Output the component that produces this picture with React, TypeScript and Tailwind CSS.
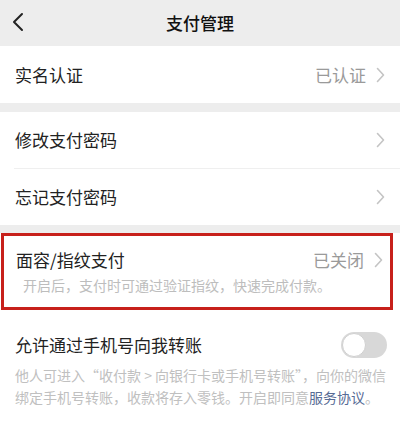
import React from 'react';

const Chevron = () => (
  <svg width="9" height="16" viewBox="0 0 9 16" fill="none" className="shrink-0">
    <path d="M1.5 1.5L7.5 8L1.5 14.5" stroke="#c4c4c4" strokeWidth="1.6" strokeLinecap="round" strokeLinejoin="round" />
  </svg>
);

const Row: React.FC<{ label: string; value?: string; h: string }> = ({ label, value, h }) => (
  <div className={`flex items-center justify-between pl-[15px] pr-[15px] ${h}`}>
    <span className="text-[17px] text-[#222]">{label}</span>
    <div className="flex items-center gap-[10px]">
      {value && <span className="text-[17px] text-[#9a9a9a]">{value}</span>}
      <Chevron />
    </div>
  </div>
);

export default function App() {
  return (
    <div
      className="w-[400px] h-[425px] bg-white overflow-hidden"
      style={{ fontFamily: '"Noto Sans CJK SC", "Noto Sans", sans-serif' }}
    >
      {/* header */}
      <div className="relative h-[46px] bg-[#ededed] flex items-center justify-center">
        <svg width="12" height="20" viewBox="0 0 12 20" fill="none" className="absolute left-[12px] top-[12px]">
          <path d="M10 2L2 10L10 18" stroke="#222" strokeWidth="2" strokeLinecap="round" strokeLinejoin="round" />
        </svg>
        <span className="text-[17px] font-medium text-[#111]">支付管理</span>
      </div>

      <div className="bg-white">
        <Row label="实名认证" value="已认证" h="h-[57px]" />
      </div>

      <div className="h-[9px] bg-[#ededed]" />

      <div className="bg-white">
        <Row label="修改支付密码" h="h-[56px]" />
        <div className="ml-[14px] h-px bg-[#efefef]" />
        <Row label="忘记支付密码" h="h-[56px]" />
      </div>

      <div className="h-[8px] bg-[#ededed]" />

      <div className="bg-white">
        <div className="ml-[1px] w-[392px] h-[77px] border-[3px] border-[#c7201b] bg-white flex flex-col">
          <div className="flex items-center justify-between pl-[12px] pr-[7px] pt-[12px]">
            <span className="text-[17px] text-[#222] leading-[24px]">面容/指纹支付</span>
            <div className="flex items-center gap-[10px]">
              <span className="text-[17px] text-[#9a9a9a] leading-[24px]">已关闭</span>
              <Chevron />
            </div>
          </div>
          <div className="pl-[19px] mt-[3px] text-[14px] leading-[20px] text-[#bdbdbd] whitespace-nowrap">
            开启后，支付时可通过验证指纹，快速完成付款。
          </div>
        </div>
      </div>

      <div className="bg-white px-[15px] pt-[22px]">
        <div className="flex items-center justify-between">
          <span className="text-[17px] text-[#222] leading-[26px]">允许通过手机号向我转账</span>
          <div className="relative w-[46px] h-[26px] rounded-full bg-[#d8d8d8] -mr-[2px]">
            <div className="absolute left-[1px] top-[1px] w-[24px] h-[24px] rounded-full bg-white border border-[#d0d0d0]" />
          </div>
        </div>
        <div className="mt-[6px] text-[14px] leading-[22px] text-[#c0c0c0] whitespace-nowrap">
          他人可进入“收付款 &gt; 向银行卡或手机号转账”，向你的微信
          <br />
          绑定手机号转账，收款将存入零钱。开启即同意<span className="text-[#576b95]">服务协议</span>。
        </div>
      </div>
    </div>
  );
}
